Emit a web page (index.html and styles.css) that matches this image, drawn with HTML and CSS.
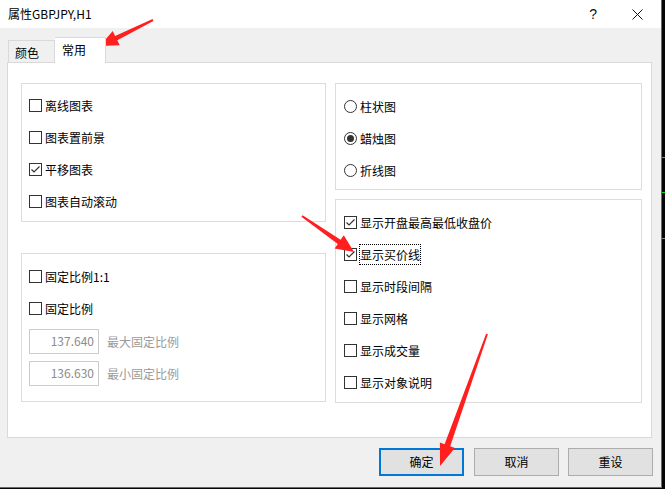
FILE: index.html
```html
<!DOCTYPE html>
<html lang="zh-CN">
<head>
<meta charset="utf-8">
<title>属性GBPJPY,H1</title>
<link rel="stylesheet" href="styles.css">
</head>
<body>
<div class="screen">
  <div class="window">
    <div class="titlebar">
      <span class="title">属性GBPJPY,H1</span>
      <span class="help">?</span>
      <svg class="close" width="11" height="11" viewBox="0 0 11 11"><path d="M0.5 0.5 L10.5 10.5 M10.5 0.5 L0.5 10.5" stroke="#111" stroke-width="1" fill="none"/></svg>
    </div>
    <div class="body">
      <div class="tabs">
        <div class="tab">颜色</div>
        <div class="tab active">常用</div>
      </div>
      <div class="panel">
        <div class="col col-left">
          <div class="group g-a">
            <div class="row"><span class="cb"></span><span class="lbl">离线图表</span></div>
            <div class="row"><span class="cb"></span><span class="lbl">图表置前景</span></div>
            <div class="row"><span class="cb"><svg width="11" height="11" viewBox="0 0 11 11"><polyline points="1.5,5.5 4,8 9.5,2.5" fill="none" stroke="#333" stroke-width="1.2"/></svg></span><span class="lbl">平移图表</span></div>
            <div class="row"><span class="cb"></span><span class="lbl">图表自动滚动</span></div>
          </div>
          <div class="group g-b">
            <div class="row"><span class="cb"></span><span class="lbl">固定比例1:1</span></div>
            <div class="row"><span class="cb"></span><span class="lbl">固定比例</span></div>
            <div class="field-row first"><span class="field">137.640</span><span class="flbl">最大固定比例</span></div>
            <div class="field-row"><span class="field">136.630</span><span class="flbl">最小固定比例</span></div>
          </div>
        </div>
        <div class="col col-right">
          <div class="group g-c">
            <div class="row"><span class="rb"></span><span class="lbl">柱状图</span></div>
            <div class="row"><span class="rb"><span class="dot"></span></span><span class="lbl">蜡烛图</span></div>
            <div class="row"><span class="rb"></span><span class="lbl">折线图</span></div>
          </div>
          <div class="group g-d">
            <div class="row"><span class="cb"><svg width="11" height="11" viewBox="0 0 11 11"><polyline points="1.5,5.5 4,8 9.5,2.5" fill="none" stroke="#333" stroke-width="1.2"/></svg></span><span class="lbl">显示开盘最高最低收盘价</span></div>
            <div class="row"><span class="cb"><svg width="11" height="11" viewBox="0 0 11 11"><polyline points="1.5,5.5 4,8 9.5,2.5" fill="none" stroke="#333" stroke-width="1.2"/></svg></span><span class="lbl focus">显示买价线</span></div>
            <div class="row"><span class="cb"></span><span class="lbl">显示时段间隔</span></div>
            <div class="row"><span class="cb"></span><span class="lbl">显示网格</span></div>
            <div class="row"><span class="cb"></span><span class="lbl">显示成交量</span></div>
            <div class="row"><span class="cb"></span><span class="lbl">显示对象说明</span></div>
          </div>
        </div>
      </div>
      <div class="buttons">
        <div class="btn default">确定</div>
        <div class="btn">取消</div>
        <div class="btn">重设</div>
      </div>
    </div>
  </div>
  <div class="strip"></div>
  <svg class="arrows" width="665" height="489" viewBox="0 0 665 489">
    <polygon fill="#ff1f1f" points="152.6,19.1 115.1,35.9 112.7,30.9 100,46 119.7,45.3 117.3,40.3 153.4,20.9"/>
    <polygon fill="#ff1f1f" points="301.4,216.8 337.8,243.9 334.6,248.4 354,252 343.8,235.2 340.6,239.7 302.6,215.2"/>
    <polygon fill="#ff1f1f" points="487.9,334.3 450.2,446.3 454.9,448 440,466 439.9,442.6 444.6,444.3 486.1,333.7"/>
  </svg>
</div>
</body>
</html>
```
FILE: styles.css
```css
html, body {
  margin: 0;
  padding: 0;
  background: #050505;
}
body {
  font-family: "Noto Sans CJK SC", "Microsoft YaHei", sans-serif;
  font-size: 12px;
  color: #000;
}
.screen {
  position: relative;
  width: 665px;
  height: 489px;
  display: flex;
  overflow: hidden;
}
.window {
  width: 662px;
  height: 488px;
  box-sizing: border-box;
  border-right: 1px solid #1a7fd4;
  border-bottom: 1px solid #1a7fd4;
  background: #f0f0f0;
  display: flex;
  flex-direction: column;
}
.strip {
  width: 3px;
  height: 489px;
  background:
    linear-gradient(#19d219, #19d219) 0 157px / 3px 1px no-repeat,
    linear-gradient(#19d219, #19d219) 0 192px / 3px 1px no-repeat,
    linear-gradient(#8a8a8a, #8a8a8a) 0 238px / 3px 1px no-repeat,
    #050505;
}
.titlebar {
  height: 28px;
  background: #fff;
  display: flex;
  align-items: center;
  padding-left: 8px;
  padding-right: 18px;
}
.title {
  line-height: 16px;
}
.help {
  margin-left: auto;
  font-family: "Liberation Sans", Arial, sans-serif;
  font-size: 14px;
  color: #111;
  margin-right: 35px;
}
.close {
  display: block;
}
.body {
  padding: 9px 0 0 7px;
  display: flex;
  flex-direction: column;
}
.tabs {
  display: flex;
  align-items: flex-end;
  height: 25px;
  padding-left: 1px;
}
.tab {
  box-sizing: border-box;
  height: 22px;
  width: 47px;
  border: 1px solid #d9d9d9;
  border-bottom: none;
  padding-left: 6px;
  display: flex;
  align-items: center;
  line-height: 16px;
  padding-top: 2px;
}
.tab.active {
  position: relative;
  z-index: 1;
  height: 26px;
  width: 51px;
  margin-bottom: -1px;
  background: #fff;
  padding-left: 7px;
  padding-top: 0;
  padding-bottom: 2px;
  border-left: none;
}
.panel {
  box-sizing: border-box;
  width: 645px;
  height: 376px;
  border: 1px solid #d9d9d9;
  background: #fff;
  padding: 20px 9px 0 13px;
  display: grid;
  grid-template-columns: 305px 307px;
  column-gap: 9px;
  align-items: start;
}
.col {
  display: flex;
  flex-direction: column;
}
.col-left { gap: 31px; }
.col-right { gap: 9px; }
.group {
  border: 1px solid #dcdcdc;
  box-sizing: border-box;
}
.g-a { padding: 5px 0 4px 7px; }
.g-b { padding: 6px 0 15px 7px; }
.g-c { padding: 6px 0 3px 8px; }
.g-d { padding: 6px 0 4px 8px; }
.row {
  height: 32px;
  display: flex;
  align-items: center;
  gap: 3px;
}
.lbl {
  line-height: 19px;
  display: inline-block;
  white-space: nowrap;
}
.lbl.focus {
  outline: 1px dotted #000;
}
.cb {
  box-sizing: border-box;
  width: 13px;
  height: 13px;
  border: 1px solid #333;
  background: #fff;
  display: flex;
  flex: none;
}
.cb svg { display: block; }
.rb {
  box-sizing: border-box;
  width: 13px;
  height: 13px;
  border: 1px solid #333;
  border-radius: 50%;
  background: #fff;
  display: flex;
  align-items: center;
  justify-content: center;
  flex: none;
}
.dot {
  width: 7px;
  height: 7px;
  border-radius: 50%;
  background: #333;
}
.field-row {
  display: flex;
  align-items: center;
  gap: 8px;
  height: 25px;
  margin-top: 7px;
}
.field-row.first { margin-top: 5px; }
.field {
  box-sizing: border-box;
  width: 70px;
  height: 25px;
  border: 1px solid #cccccc;
  background: #fff;
  color: #8c8c8c;
  text-align: right;
  padding-right: 4px;
  line-height: 22px;
}
.flbl {
  color: #9a9a9a;
  line-height: 19px;
}
.buttons {
  display: flex;
  justify-content: flex-end;
  gap: 9px;
  padding-top: 10px;
  padding-right: 8px;
}
.btn {
  box-sizing: border-box;
  width: 85px;
  height: 28px;
  border: 1px solid #adadad;
  background: #e1e1e1;
  display: flex;
  align-items: center;
  justify-content: center;
  line-height: 16px;
}
.btn.default {
  border: 2px solid #0078d7;
  margin-right: 1px;
}
.arrows {
  position: absolute;
  left: 0;
  top: 0;
  pointer-events: none;
}
```
